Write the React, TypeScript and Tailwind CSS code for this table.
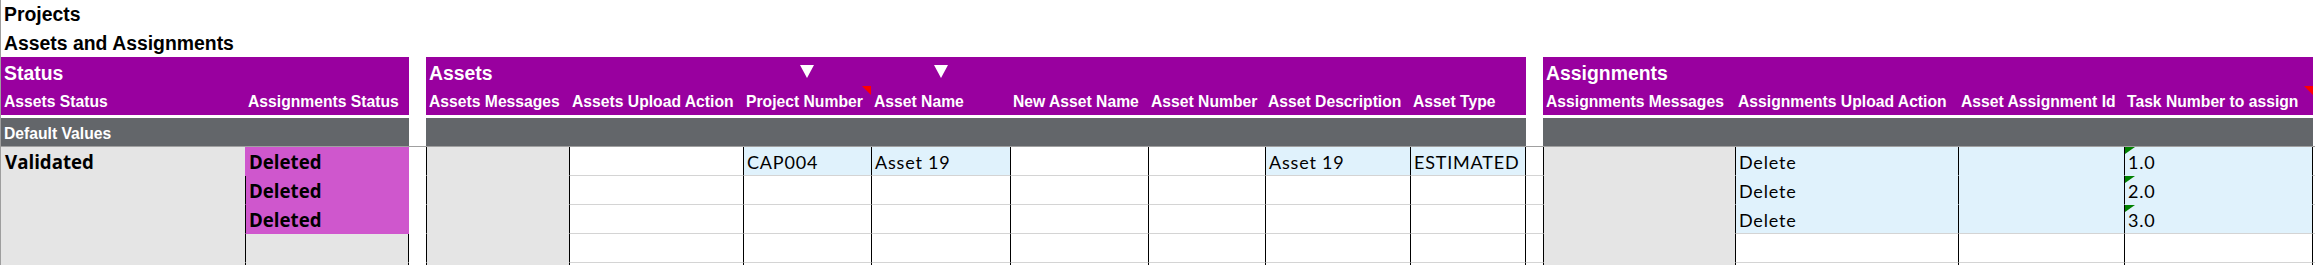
type Fill = "white" | "gray" | "blue" | "pink"

type Col = {
    w: string
    label: string
    filter?: boolean
    comment?: boolean
}

type Cell = {
    f: Fill
    t?: string
    status?: boolean // bold status text
    l?: boolean // black left border
    r?: boolean // black right border
    g?: boolean // force gridline under a filled cell
    mark?: boolean // green corner marker
}

const bg: Record<Fill, string> = {
    white: "bg-white",
    gray: "bg-[#e5e5e5]",
    blue: "bg-[#e0f2fc]",
    pink: "bg-[#cf57cd]",
}

const under: Record<Fill, string> = {
    white: "border-b-[#d4d4d4]",
    gray: "border-b-[#e5e5e5]",
    blue: "border-b-[#e0f2fc]",
    pink: "border-b-[#cf57cd]",
}

const statusCols: Col[] = [
    { w: "w-[244px]", label: "Assets Status" },
    { w: "w-[164px]", label: "Assignments Status" },
]

const assetCols: Col[] = [
    { w: "w-[143px]", label: "Assets Messages" },
    { w: "w-[174px]", label: "Assets Upload Action" },
    { w: "w-[128px]", label: "Project Number", filter: true, comment: true },
    { w: "w-[139px]", label: "Asset Name", filter: true },
    { w: "w-[138px]", label: "New Asset Name" },
    { w: "w-[117px]", label: "Asset Number" },
    { w: "w-[145px]", label: "Asset Description" },
    { w: "w-[116px]", label: "Asset Type" },
]

const assignCols: Col[] = [
    { w: "w-[192px]", label: "Assignments Messages" },
    { w: "w-[223px]", label: "Assignments Upload Action" },
    { w: "w-[166px]", label: "Asset Assignment Id" },
    { w: "w-[189px]", label: "Task Number to assign", comment: true },
]

const statusRows: Cell[][] = [
    [{ f: "gray", t: "Validated", status: true }, { f: "pink", t: "Deleted", status: true }],
    [{ f: "gray" }, { f: "pink", t: "Deleted", status: true, l: true }],
    [{ f: "gray" }, { f: "pink", t: "Deleted", status: true, l: true }],
    [{ f: "gray" }, { f: "gray", l: true, r: true }],
    [{ f: "gray" }, { f: "gray", l: true, r: true }],
]

const emptyAssets: Cell[] = [
    { f: "gray", l: true },
    { f: "white", l: true },
    { f: "white", l: true },
    { f: "white", l: true },
    { f: "white", l: true },
    { f: "white", l: true },
    { f: "white", l: true },
    { f: "white", l: true, r: true },
]

const assetRows: Cell[][] = [
    [
        { f: "gray", l: true },
        { f: "white", l: true },
        { f: "blue", t: "CAP004", l: true, g: true },
        { f: "blue", t: "Asset 19", l: true, g: true },
        { f: "white", l: true },
        { f: "white", l: true },
        { f: "blue", t: "Asset 19", l: true, g: true },
        { f: "blue", t: "ESTIMATED", l: true, r: true, g: true },
    ],
    emptyAssets,
    emptyAssets,
    emptyAssets,
    emptyAssets,
]

const taskRow = (n: string, last?: boolean): Cell[] => [
    { f: "gray", l: true },
    { f: "blue", t: "Delete", l: true, g: last },
    { f: "blue", l: true, g: last },
    { f: "blue", t: n, l: true, r: true, g: last, mark: true },
]

const emptyAssign: Cell[] = [
    { f: "gray", l: true },
    { f: "white", l: true },
    { f: "white", l: true },
    { f: "white", l: true, r: true },
]

const assignRows: Cell[][] = [
    taskRow("1.0"),
    taskRow("2.0"),
    taskRow("3.0", true),
    emptyAssign,
    emptyAssign,
]

function DataCell({ col, cell, last }: { col: Col; cell: Cell; last: boolean }) {
    return (
        <div
            className={`${col.w} ${last ? "h-[2px]" : "h-[29px] border-b"} ${bg[cell.f]} ${
                cell.g ? "border-b-[#d4d4d4]" : under[cell.f]
            } ${cell.l ? "border-l border-l-black pl-[3px]" : "pl-[4px]"} ${
                cell.r ? "border-r border-r-black" : ""
            } ${cell.status ? "pb-[3px]" : "pb-[4px]"} relative flex shrink-0 items-end overflow-visible`}
        >
            {cell.mark && (
                <svg className="absolute left-0 top-0" width="10" height="7" viewBox="0 0 10 7">
                    <polygon points="0,0 10,0 0,7" fill="#008000" />
                </svg>
            )}
            {cell.t && !last && (
                <span
                    className={
                        cell.status
                            ? "font-['Open_Sans',sans-serif] text-[18.7px] font-bold leading-none text-black whitespace-nowrap"
                            : "font-['Lato',sans-serif] text-[18px] tracking-[0.8px] leading-none text-black whitespace-nowrap"
                    }
                >
                    {cell.t}
                </span>
            )}
        </div>
    )
}

function Section({
    title,
    cols,
    rows,
    band,
}: {
    title: string
    cols: Col[]
    rows: Cell[][]
    band?: string
}) {
    return (
        <div className="flex shrink-0 flex-col">
            {/* section title + filter arrows */}
            <div className="flex h-[29px] bg-[#99009f]">
                {cols.map((c, i) => (
                    <div
                        key={i}
                        className={`${c.w} flex shrink-0 ${
                            i === 0 ? "items-end pb-[3px] pl-[3px]" : "justify-center pt-[8px]"
                        }`}
                    >
                        {i === 0 && (
                            <span className="text-[19.4px] font-bold leading-none text-white whitespace-nowrap">
                                {title}
                            </span>
                        )}
                        {c.filter && (
                            <svg width="14" height="14" viewBox="0 0 14 14">
                                <polygon points="0,0 14,0 7,13" fill="#ffffff" />
                            </svg>
                        )}
                    </div>
                ))}
            </div>

            {/* column labels */}
            <div className="flex h-[29px] bg-[#99009f]">
                {cols.map((c, i) => (
                    <div key={i} className={`${c.w} relative flex shrink-0 items-end pb-[5px] pl-[3px]`}>
                        <span className="text-[15.7px] font-bold leading-none text-white whitespace-nowrap">
                            {c.label}
                        </span>
                        {c.comment && (
                            <svg className="absolute right-0 top-0" width="9" height="9" viewBox="0 0 9 9">
                                <polygon points="0,0 9,0 9,9" fill="#ff0000" />
                            </svg>
                        )}
                    </div>
                ))}
            </div>

            <div className="h-[3px] bg-white" />

            <div className="flex h-[28px] items-end bg-[#63666a] pb-[4px] pl-[3px]">
                {band && (
                    <span className="text-[15.7px] font-bold leading-none text-white whitespace-nowrap">
                        {band}
                    </span>
                )}
            </div>

            <div className="border-t border-t-[#a0a0a0]">
                {rows.map((row, ri) => (
                    <div key={ri} className="flex">
                        {row.map((cell, ci) => (
                            <DataCell key={ci} col={cols[ci]} cell={cell} last={ri === rows.length - 1} />
                        ))}
                    </div>
                ))}
            </div>
        </div>
    )
}

function Gap({ w, grid }: { w: string; grid: boolean }) {
    return (
        <div className={`${w} flex shrink-0 flex-col`}>
            <div className="h-[89px] bg-white" />
            <div className="border-t border-t-[#a0a0a0]">
                {[0, 1, 2, 3].map((i) => (
                    <div
                        key={i}
                        className={`h-[29px] border-b ${grid ? "border-b-[#d4d4d4]" : "border-b-white"}`}
                    />
                ))}
            </div>
        </div>
    )
}

export default function App() {
    return (
        <div className="h-[265px] w-[2315px] overflow-hidden border-l border-l-[#9e9e9e] bg-white font-['Liberation_Sans',Arial,sans-serif]">
            <div className="flex h-[29px] items-end pb-[5px] pl-[3px]">
                <span className="text-[19.4px] font-bold leading-none text-black">Projects</span>
            </div>
            <div className="flex h-[28px] items-end pb-[4px] pl-[3px]">
                <span className="text-[19.4px] font-bold leading-none text-black">Assets and Assignments</span>
            </div>

            <div className="flex">
                <Section title="Status" cols={statusCols} rows={statusRows} band="Default Values" />
                <Gap w="w-[17px]" grid={false} />
                <Section title="Assets" cols={assetCols} rows={assetRows} />
                <Gap w="w-[17px]" grid />
                <Section title="Assignments" cols={assignCols} rows={assignRows} />
                <Gap w="w-[2px]" grid />
            </div>
        </div>
    )
}
